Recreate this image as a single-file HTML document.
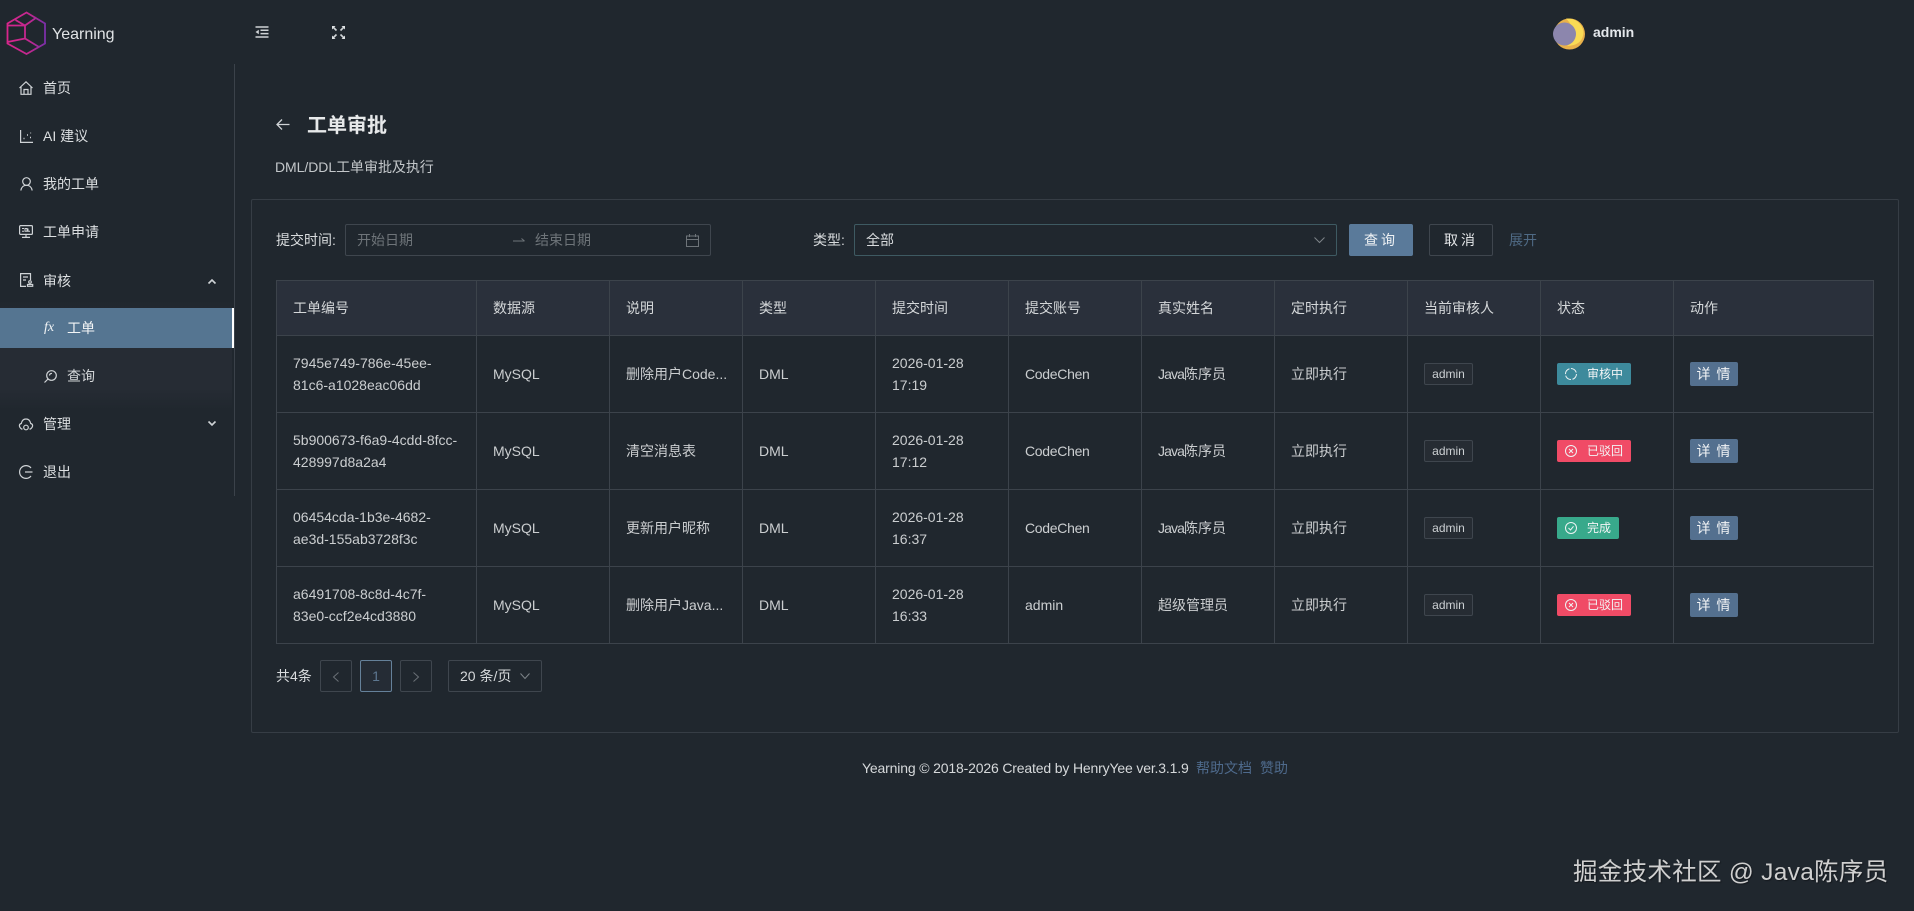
<!DOCTYPE html>
<html lang="zh-CN">
<head>
<meta charset="utf-8">
<title>Yearning</title>
<style>
*{box-sizing:border-box}
html,body{margin:0;padding:0;width:1914px;height:911px;overflow:hidden;background:#20272e;color:#d9dcde;font:14px/22px "Liberation Sans","Noto Sans CJK SC",sans-serif}
.a{position:absolute;white-space:nowrap}
svg{position:absolute;overflow:visible;fill:none;stroke:#cfd3d6;stroke-width:1.2}
.nav{left:43px;height:22px;color:#dcdfe1}
.sub{background:linear-gradient(#20272e 0,#262c34 25%,#262c34 80%,#20272e 100%);position:absolute;left:0;top:300px;width:232px;height:110px}
.active{position:absolute;left:0;top:308px;width:235px;height:40px;background:#557591;border-right:3px solid #fff}
.card{position:absolute;left:251px;top:199px;width:1648px;height:534px;border:1px solid #363d45;border-radius:2px}
.box{position:absolute;border:1px solid #3f464e;border-radius:2px}
table{position:absolute;left:276px;top:280px;width:1597px;border-collapse:collapse;table-layout:fixed}
th,td{border:1px solid #3c434b;padding:0 16px;text-align:left;font-weight:400;white-space:nowrap;position:relative}
th{background:#2a303b;height:55px;color:#d4d7d9}
td{height:77px;color:#cbced0}
.c{letter-spacing:-.3px}
.j{letter-spacing:-.9px}
.tag{display:inline-block;position:relative;top:-1px;height:22px;line-height:20px;font-size:12px;border:1px solid #3f464e;border-radius:2px;background:#262c33;color:#ccd0d3;width:49px;padding:0;text-align:center;vertical-align:middle}
.st{display:inline-block;position:relative;top:-1px;height:22px;line-height:22px;font-size:12px;border-radius:2px;color:#f2f4f5;padding-left:30px;width:74px;vertical-align:middle}
.st svg{left:8px;top:5px;stroke:#eef3f4;stroke-width:1}
.b{background:#3d8a9c}.r{background:#f04b66}.g{background:#38a98b;width:62px}
.btn{display:inline-block;width:48px;height:24px;line-height:24px;background:#54708f;border-radius:2px;color:#f1f3f5;text-align:center;letter-spacing:1px;vertical-align:middle}
</style>
</head>
<body>

<!-- logo -->
<svg width="40" height="44" style="left:6px;top:11px;stroke-width:1.8" viewBox="6 11 40 44">
<defs><linearGradient id="lg" x1="0" x2="1" y1="0" y2="0"><stop offset="0" stop-color="#d8268c"/><stop offset=".6" stop-color="#c0288f"/><stop offset="1" stop-color="#7b2fa8"/></linearGradient></defs>
<path stroke="url(#lg)" d="M26.500 12.500L45 23.500V43.500L26.500 54L7.500 43.500V23.500Z M7.500 25.500H25V38.500L7.500 42 M25 25.500L15.500 20 M25 25.500L36.500 17.500 M25 38.500L39 47"/>
</svg>
<div class="a" style="left:52px;top:24px;font-size:16px;color:#e0e3e5">Yearning</div>

<!-- header icons -->
<svg width="14" height="12" style="left:255px;top:26px">
<path stroke-width="1.5" d="M0.500 1H13.500M5.500 4.300H13.500M5.500 7.600H13.500M0.500 11H13.500"/><path stroke="none" fill="#cfd3d6" d="M0.500 6L3.800 3.700V8.300Z"/>
</svg>
<svg width="13" height="13" style="left:332px;top:26px">
<path stroke-width="1.600" d="M1 1L4.500 4.500M12 1L8.500 4.500M1 12L4.500 8.500M12 12L8.500 8.500"/>
<path stroke="none" fill="#dfe2e4" d="M0 0H3.500L0 3.500ZM13 0V3.500L9.500 0ZM0 13V9.500L3.500 13ZM13 13H9.500L13 9.500Z"/>
</svg>
<svg width="32" height="32" style="left:1553px;top:18px;stroke:none">
<circle cx="16.500" cy="16" r="15.500" fill="#e9b14b"/>
<path fill="#fadb55" d="M13 0.600A15.500 15.500 0 0 1 30.500 14C30 23 25 27.500 14 28C21 24 23.500 10 13 0.600Z"/>
<circle cx="11.500" cy="16" r="11.500" fill="#8c86ad"/>
</svg>
<div class="a" style="left:1593px;top:21px;font-size:14px;font-weight:700;color:#e4e8ec">admin</div>

<!-- sidebar -->
<div class="sub"></div>
<div class="active"></div>
<div class="a" style="left:234px;top:64px;width:1px;height:432px;background:#3b424a"></div>

<svg width="14" height="14" style="left:19px;top:81px"><path d="M0.500 7L7 0.800L13.500 7M2 6V13.300H12V6M5 13V8.500H9V13"/></svg>
<div class="a nav" style="top:77px">首页</div>
<svg width="13" height="13" style="left:20px;top:130px"><path d="M0.600 0V12.400H13"/><path stroke-width="1.6" d="M3.500 8.500h1M7 5h1M10 7.500h1M10.500 3h.6"/></svg>
<div class="a nav" style="top:125px">AI 建议</div>
<svg width="13" height="14" style="left:20px;top:177px"><circle cx="6.500" cy="4.500" r="3.800"/><path d="M0.800 13.500C1.500 9.500 4 8.300 6.500 8.300S11.500 9.500 12.200 13.500"/></svg>
<div class="a nav" style="top:173px">我的工单</div>
<svg width="14" height="13" style="left:19px;top:225px"><rect x="0.600" y="0.600" width="12.800" height="8.800" rx="1"/><path d="M3 12.400H11M7 9.500V12.400"/><path stroke-width="1" d="M3 3.500H5M3 6.200H5M6 3.500V6.200H8V3.500ZM9 3.500V6.200H11"/></svg>
<div class="a nav" style="top:221px">工单申请</div>
<svg width="13" height="14" style="left:20px;top:273px"><path d="M10.500 7V0.600H0.600V13.400H6M3 4H8M3 7H6"/><circle cx="10" cy="9" r="1.300"/><path d="M7.500 13.300H12.700V11.500H7.500Z"/></svg>
<div class="a nav" style="top:270px">审核</div>
<svg width="8" height="5" style="left:208px;top:279px"><path stroke-width="1.600" d="M0.500 4.500L4 1L7.500 4.500"/></svg>
<div class="a" style="left:44px;top:317px;font:italic 14px/22px 'Liberation Serif',serif;color:#f0f3f5">fx</div>
<div class="a" style="left:67px;top:317px;color:#f3f5f6">工单</div>
<svg width="13" height="13" style="left:44px;top:370px"><circle cx="7.500" cy="5.500" r="4.800"/><path d="M4 9L0.500 12.500M5.500 5.500A2 2 0 0 1 8 3.500"/></svg>
<div class="a" style="left:67px;top:365px;color:#d4d7d9">查询</div>
<svg width="14" height="13" style="left:19px;top:418px"><path d="M3.500 11H2.500C-0.500 8.500 0 6 2.300 5.500C3 2 5 1 7 1S11 2 11.700 5.500C14 6 14.500 8.500 11.500 11H10.500"/><circle cx="7" cy="9.500" r="2.300"/></svg>
<div class="a nav" style="top:413px">管理</div>
<svg width="8" height="5" style="left:208px;top:421px"><path stroke-width="1.600" d="M0.500 0.500L4 4L7.500 0.500"/></svg>
<svg width="14" height="14" style="left:19px;top:465px"><path d="M12 3A6.400 6.400 0 1 0 12 11M6 7H13.500"/></svg>
<div class="a nav" style="top:461px">退出</div>

<!-- page head -->
<svg width="14" height="11" style="left:276px;top:119px"><path stroke-width="1.300" d="M13.500 5.500H1M6 0.500L1 5.500L6 10.500"/></svg>
<div class="a" style="left:307px;top:112px;font-size:20px;line-height:28px;font-weight:700;color:#e7e9ea">工单审批</div>
<div class="a" style="left:275px;top:156px;color:#c3c7ca;letter-spacing:-.05px">DML/DDL工单审批及执行</div>

<div class="card"></div>

<!-- filters -->
<div class="a" style="left:276px;top:229px;color:#d9dcde">提交时间: </div>
<div class="box" style="left:345px;top:224px;width:366px;height:32px"></div>
<div class="a" style="left:357px;top:229px;color:#6e7479">开始日期</div>
<svg width="12" height="6" style="left:513px;top:238px;stroke:#6e7479;stroke-width:1"><path d="M0 3H11.500M8.500 0.500L11.500 3"/></svg>
<div class="a" style="left:535px;top:229px;color:#6e7479">结束日期</div>
<svg width="13" height="13" style="left:686px;top:234px;stroke:#6e7479;stroke-width:1"><path d="M0.500 2H12.500V12.500H0.500ZM0.500 5.500H12.500M3.500 0V3M9.500 0V3"/></svg>

<div class="a" style="left:813px;top:229px;color:#d9dcde">类型:</div>
<div class="box" style="left:854px;top:224px;width:483px;height:32px;border-color:#3e5a62"></div>
<div class="a" style="left:866px;top:229px;color:#d9dcde">全部</div>
<svg width="11" height="6" style="left:1314px;top:237px;stroke:#7d8388;stroke-width:1"><path d="M0.500 0.500L5.500 5.500L10.500 0.500"/></svg>
<div class="a" style="left:1349px;top:224px;width:64px;height:32px;line-height:32px;background:#5a7a9a;border-radius:2px;text-align:center;letter-spacing:3px;color:#f0f3f5">查询</div>
<div class="box" style="left:1429px;top:224px;width:64px;height:32px;line-height:30px;text-align:center;letter-spacing:3px;color:#e4e6e8">取消</div>
<div class="a" style="left:1509px;top:229px;color:#4f6a85">展开</div>

<!-- table -->
<table>
<colgroup><col style="width:200px"><col style="width:133px"><col style="width:133px"><col style="width:133px"><col style="width:133px"><col style="width:133px"><col style="width:133px"><col style="width:133px"><col style="width:133px"><col style="width:133px"><col style="width:200px"></colgroup>
<tr><th>工单编号</th><th>数据源</th><th>说明</th><th>类型</th><th>提交时间</th><th>提交账号</th><th>真实姓名</th><th>定时执行</th><th>当前审核人</th><th>状态</th><th>动作</th></tr>
<tr><td>7945e749-786e-45ee-<br>81c6-a1028eac06dd</td><td>MySQL</td><td>删除用户Code...</td><td>DML</td><td>2026-01-28<br>17:19</td><td class="c">CodeChen</td><td><span class="j">Java</span>陈序员</td><td>立即执行</td><td><span class="tag">admin</span></td><td><span class="st b"><svg width="12" height="12"><path stroke-dasharray="7 1.500" d="M6 .5A5.500 5.500 0 1 1 5.900 .5"/></svg>审核中</span></td><td><span class="btn">详 情</span></td></tr>
<tr><td>5b900673-f6a9-4cdd-8fcc-<br>428997d8a2a4</td><td>MySQL</td><td>清空消息表</td><td>DML</td><td>2026-01-28<br>17:12</td><td class="c">CodeChen</td><td><span class="j">Java</span>陈序员</td><td>立即执行</td><td><span class="tag">admin</span></td><td><span class="st r"><svg width="12" height="12"><circle cx="6" cy="6" r="5.500"/><path d="M4 4L8 8M8 4L4 8"/></svg>已驳回</span></td><td><span class="btn">详 情</span></td></tr>
<tr><td>06454cda-1b3e-4682-<br>ae3d-155ab3728f3c</td><td>MySQL</td><td>更新用户昵称</td><td>DML</td><td>2026-01-28<br>16:37</td><td class="c">CodeChen</td><td><span class="j">Java</span>陈序员</td><td>立即执行</td><td><span class="tag">admin</span></td><td><span class="st g"><svg width="12" height="12"><circle cx="6" cy="6" r="5.500"/><path d="M3.500 6L5.500 8L8.500 4.300"/></svg>完成</span></td><td><span class="btn">详 情</span></td></tr>
<tr><td>a6491708-8c8d-4c7f-<br>83e0-ccf2e4cd3880</td><td>MySQL</td><td>删除用户Java...</td><td>DML</td><td>2026-01-28<br>16:33</td><td>admin</td><td>超级管理员</td><td>立即执行</td><td><span class="tag">admin</span></td><td><span class="st r"><svg width="12" height="12"><circle cx="6" cy="6" r="5.500"/><path d="M4 4L8 8M8 4L4 8"/></svg>已驳回</span></td><td><span class="btn">详 情</span></td></tr>
</table>

<!-- pagination -->
<div class="a" style="left:276px;top:665px;color:#d9dcde">共4条</div>
<div class="box" style="left:320px;top:660px;width:32px;height:32px"></div>
<svg width="6" height="10" style="left:333px;top:672px;stroke:#6a7076;stroke-width:1"><path d="M5.500 .5L.5 5L5.500 9.500"/></svg>
<div class="box" style="left:360px;top:660px;width:32px;height:32px;border-color:#65819a;line-height:30px;text-align:center;color:#5d7790;background:#252c35">1</div>
<div class="box" style="left:400px;top:660px;width:32px;height:32px"></div>
<svg width="6" height="10" style="left:413px;top:672px;stroke:#6a7076;stroke-width:1"><path d="M.5 .5L5.500 5L.5 9.500"/></svg>
<div class="box" style="left:448px;top:660px;width:94px;height:32px"></div>
<div class="a" style="left:460px;top:665px;color:#d6d9db">20 条/页</div>
<svg width="10" height="6" style="left:520px;top:673px;stroke:#7d8388;stroke-width:1"><path d="M.5 .5L5 5.500L9.500 .5"/></svg>

<!-- footer -->
<div class="a" style="left:862px;top:757px;color:#d6d9db;letter-spacing:-.16px">Yearning © 2018-2026 Created by HenryYee ver.3.1.9</div>
<div class="a" style="left:1196px;top:757px;color:#4e6a8c">帮助文档</div>
<div class="a" style="left:1260px;top:757px;color:#4e6a8c">赞助</div>

<!-- watermark -->
<div class="a" style="left:1573px;top:857px;font-size:24.500px;line-height:32px;letter-spacing:.3px;color:#cfcfcf;text-shadow:1px 1px 1px #15191e">掘金技术社区 @ Java陈序员</div>

</body>
</html>
